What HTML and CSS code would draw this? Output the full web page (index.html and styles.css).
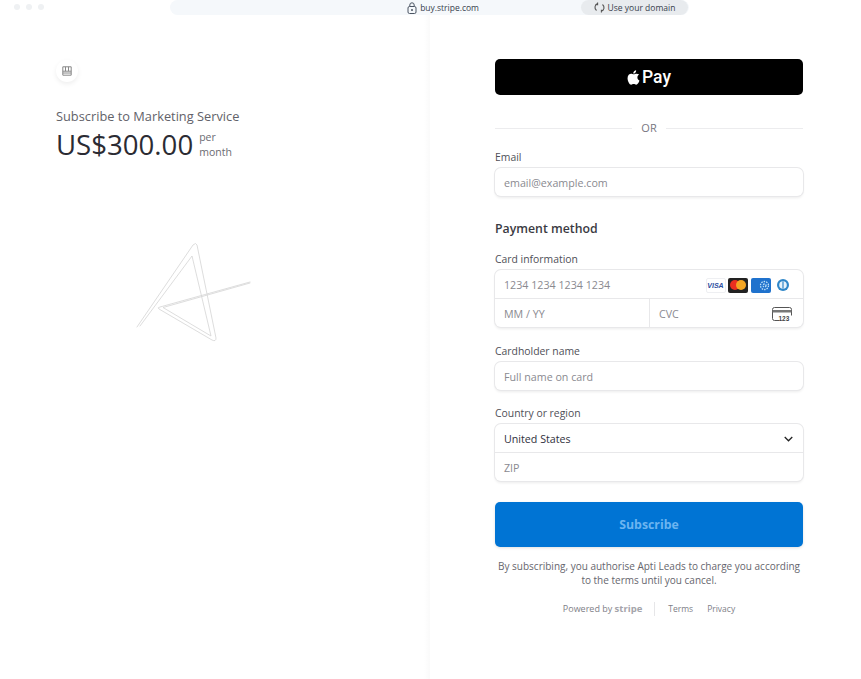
FILE: index.html
```html
<!DOCTYPE html>
<html lang="en">

<head>
    <meta charset="UTF-8">
    <meta name="viewport" content="width=device-width, initial-scale=1.0">
    <title>Subscribe to Marketing Service</title>
    <link rel="stylesheet" href="styles.css">
</head>

<body>
    <div class="topbar">
        <div class="dots"><span></span><span></span><span></span></div>
        <div class="url-bar">
            <div class="url-main">
                <svg class="lock" width="10" height="12" viewBox="0 0 10 12" fill="none" stroke="#4b5563" stroke-width="1">
                    <rect x="1" y="4.500" width="8" height="7" rx="1.500"/>
                    <path d="M2.800 4.500V3a2.200 2.200 0 0 1 4.400 0v1.500"/>
                    <circle cx="5" cy="8" r=".6" fill="#4b5563"/>
                </svg>
                <span>buy.stripe.com</span>
            </div>
            <div class="domain-pill">
                <svg width="11" height="11" viewBox="0 0 11 11" fill="none" stroke="#555" stroke-width="1.100">
                    <path d="M2.500 8.500A4 4 0 0 1 3.600 1.600M3.600 .4v2.200H1.600"/>
                    <path d="M8.500 2.500A4 4 0 0 1 7.400 9.400M7.400 10.600V8.400h2"/>
                </svg>
                <span>Use your domain</span>
            </div>
        </div>
    </div>

    <div class="page">
        <div class="summary">
            <div class="store-badge">
                <svg width="10" height="10" viewBox="0 0 10 10" fill="none" stroke="#888" stroke-width="1">
                    <path d="M.8.8h8.400v8.400H.8zM.8 5.200h8.400M.8 7h8.400M3.500.8v4.400M6.500.8v4.400"/>
                </svg>
            </div>
            <div class="product-name">Subscribe to Marketing Service</div>
            <div class="price-row">
                <span class="price">US$300.00</span>
                <span class="period">per<br>month</span>
            </div>
            <svg class="signature" width="120" height="104" viewBox="0 0 120 104" fill="none" stroke="#d4d4d4" stroke-width=".8" stroke-linejoin="round" stroke-linecap="round">
                <path d="M2 85L58 3Q61 0 62 3L81 96Q81 100 77 98L24 67Q22 65.500 25 65L115 40"/>
                <path d="M5 84L57 14L76 94L28 65.500L115 41"/>
            </svg>
        </div>

        <div class="checkout">
            <button class="apple-pay">
                <svg width="13" height="15" viewBox="0 0 14 16" fill="#fff">
                    <path d="M10.200 3.900c-1.100 0-1.900.7-2.900.7-1 0-1.800-.7-2.800-.7C2.700 3.900.6 5.400.6 8.700c0 3 2.100 7 3.900 7 .9 0 1.500-.7 2.700-.7 1.200 0 1.700.7 2.700.7 1.500 0 3-2.700 3.500-4.600-1.400-.6-2.200-1.800-2.200-3.200 0-1.300.7-2.400 1.900-3-.7-.7-1.800-1-2.900-1z"/>
                    <path d="M9.800.2c.1 1.100-.3 2-.9 2.600-.6.700-1.400 1.100-2.200 1 0-1 .4-1.900 1-2.500C8.300.7 9.100.3 9.800.2z"/>
                </svg>
                <span>Pay</span>
            </button>

            <div class="divider"><span>OR</span></div>

            <label class="field-label label-email">Email</label>
            <div class="field-box">
                <div class="field-row placeholder">email@example.com</div>
            </div>

            <h2 class="section-title">Payment method</h2>

            <label class="field-label">Card information</label>
            <div class="field-box">
                <div class="field-row placeholder split card-row">
                    <span>1234 1234 1234 1234</span>
                    <span class="card-icons">
                        <span class="card card-visa">VISA</span>
                        <span class="card card-mc"><i></i><i></i></span>
                        <span class="card card-amex">
                            <svg width="11" height="11" viewBox="0 0 11 11" fill="none" stroke="#bfe0f8" stroke-width="1.300" stroke-dasharray="1.500 1">
                                <circle cx="5.500" cy="5.500" r="4"/>
                                <circle cx="5.500" cy="5.500" r="1.500"/>
                            </svg>
                        </span>
                        <span class="card card-diners">
                            <svg width="12" height="12" viewBox="0 0 12 12">
                                <circle cx="6" cy="6" r="6" fill="#2f86c8"/>
                                <circle cx="6" cy="6" r="3.800" fill="#e8f3fb"/>
                                <path d="M6 2.500v7" stroke="#2f86c8" stroke-width="1.200"/>
                            </svg>
                        </span>
                    </span>
                </div>
                <div class="row-line two-cols">
                    <div class="field-row placeholder">MM / YY</div>
                    <div class="field-row placeholder split col-right">
                        <span>CVC</span>
                        <svg width="20" height="14" viewBox="0 0 20 14" fill="none">
                            <path d="M7 13.500H2.500a2 2 0 0 1-2-2v-9a2 2 0 0 1 2-2h15a2 2 0 0 1 2 2v6" stroke="#555"/>
                            <path d="M.5 3h19v2.500H.5z" fill="#777"/>
                            <text x="6.500" y="13.500" class="cvc-digits">123</text>
                        </svg>
                    </div>
                </div>
            </div>

            <label class="field-label label-gap">Cardholder name</label>
            <div class="field-box">
                <div class="field-row placeholder">Full name on card</div>
            </div>

            <label class="field-label label-gap">Country or region</label>
            <div class="field-box">
                <div class="field-row split value">
                    <span>United States</span>
                    <svg width="9" height="6" viewBox="0 0 10 6" fill="none" stroke="#222" stroke-width="1.400">
                        <path d="M.8.8L5 5l4.200-4.200"/>
                    </svg>
                </div>
                <div class="row-line field-row placeholder">ZIP</div>
            </div>

            <button class="subscribe">Subscribe</button>

            <p class="terms">By subscribing, you authorise Apti Leads to charge you according to the terms until you cancel.</p>

            <div class="footer">
                <span class="powered">Powered by <b>stripe</b></span>
                <span class="footer-links"><span>Terms</span><span>Privacy</span></span>
            </div>
        </div>
    </div>
</body>

</html>
```

FILE: styles.css
```css
html,
body {
    height: 100%;
}

body {
    font-family: "Open Sans", "Noto Sans", sans-serif;
    background-color: #fff;
    color: #30313d;
    margin: 0;
    display: flex;
    flex-direction: column;
    overflow: hidden;
}

/* browser strip along the top */
.topbar {
    height: 15px;
    flex-shrink: 0;
    display: flex;
    align-items: flex-start;
}

.dots {
    width: 170px;
    display: flex;
    gap: 6px;
    padding: 4px 0 0 14px;
    box-sizing: border-box;
}

.dots span {
    width: 6px;
    height: 6px;
    border-radius: 50%;
    background-color: #eff1f3;
}

.url-bar {
    width: 519px;
    height: 15px;
    background-color: #f5f8fb;
    border-radius: 8px;
    display: flex;
    font-size: 8.500px;
    color: #37414d;
}

.url-main {
    width: 411px;
    display: flex;
    justify-content: flex-end;
    align-items: center;
    gap: 3px;
    padding-right: 102px;
    box-sizing: border-box;
}

.domain-pill {
    width: 107px;
    height: 15px;
    background-color: #e8ebee;
    border-radius: 8px;
    display: flex;
    align-items: center;
    justify-content: center;
    gap: 3px;
}

.page {
    flex: 1;
    display: flex;
}

/* left side */
.summary {
    width: 430px;
    flex-shrink: 0;
    padding: 45px 0 0 56px;
    box-sizing: border-box;
    background: linear-gradient(to right, #fff 424px, #fafafa 430px);
}

.store-badge {
    width: 22px;
    height: 22px;
    border-radius: 50%;
    box-shadow: 0 2px 5px rgba(0, 0, 0, 0.07);
    display: flex;
    align-items: center;
    justify-content: center;
}

.product-name {
    margin-top: 24px;
    font-size: 12.800px;
    line-height: 20px;
    color: #626269;
}

.price-row {
    display: flex;
    align-items: center;
    gap: 6px;
    margin-top: -1px;
}

.price {
    font-size: 27.600px;
    line-height: 38px;
    color: #2b2b33;
}

.period {
    padding-top: 2px;
    font-size: 10.500px;
    line-height: 15px;
    color: #6b6b72;
}

.signature {
    display: block;
    margin: 79px 0 0 79px;
}

/* right side */
.checkout {
    flex: 1;
    padding: 44px 58px 0 65px;
}

.apple-pay {
    width: 100%;
    height: 36px;
    background-color: #000;
    color: #fff;
    border: none;
    border-radius: 5px;
    display: flex;
    align-items: center;
    justify-content: center;
    gap: 2px;
    padding: 0;
    font-family: Roboto, sans-serif;
    font-size: 17.500px;
    font-weight: 500;
}

.divider {
    display: flex;
    align-items: center;
    gap: 9px;
    margin-top: 25px;
    font-size: 11px;
    line-height: 16px;
    color: #77777f;
}

.divider::before,
.divider::after {
    content: "";
    flex: 1;
    height: 1px;
    background-color: #ececee;
}

.field-label {
    display: block;
    font-size: 10.400px;
    line-height: 14px;
    color: #4f4f57;
    margin-bottom: 4px;
}

.label-email {
    margin-top: 14px;
}

.label-gap {
    margin-top: 16.500px;
}

.field-box {
    border-radius: 6px;
    background-color: #fff;
    box-shadow: 0 0 0 1px #e8e8ea, 0 2px 3px rgba(0, 0, 0, 0.08);
}

.field-row {
    height: 28px;
    padding: 2px 9px 0;
    display: flex;
    align-items: center;
    font-size: 10.700px;
    box-sizing: border-box;
}

.split {
    justify-content: space-between;
}

.placeholder {
    color: #8a8a90;
}

.value {
    color: #30313d;
    padding-right: 10px;
}

.row-line {
    border-top: 1px solid #e8e8ea;
}

.field-row.row-line {
    height: 29px;
}

.two-cols {
    display: flex;
}

.two-cols .field-row {
    width: 50%;
}

.col-right {
    border-left: 1px solid #e8e8ea;
    padding-right: 11px;
}

.card-row {
    padding-right: 10px;
}

.cvc-digits {
    font-family: "Liberation Sans", sans-serif;
    font-size: 6.500px;
    font-weight: bold;
    fill: #444;
}

.section-title {
    margin: 24px 0 14px;
    font-size: 12.300px;
    line-height: 18px;
    font-weight: 600;
    color: #3a3a42;
}

.card-icons {
    display: flex;
    align-items: center;
    gap: 2.500px;
}

.card {
    width: 20px;
    height: 15px;
    border-radius: 2px;
    box-sizing: border-box;
    display: flex;
    align-items: center;
    justify-content: center;
}

.card-visa {
    border: 1px solid #eeeff2;
    font-family: "Liberation Sans", sans-serif;
    font-size: 7px;
    font-weight: bold;
    font-style: italic;
    color: #2b4da0;
}

.card-mc {
    background-color: #222;
}

.card-mc i {
    width: 10px;
    height: 10px;
    border-radius: 50%;
    background-color: #eb2f20;
}

.card-mc i + i {
    margin-left: -4px;
    background-color: #f5a623;
}

.card-amex {
    background-color: #1f72cd;
    justify-content: flex-end;
    padding-right: 1px;
}

.subscribe {
    display: block;
    width: 100%;
    height: 45px;
    margin-top: 20.500px;
    background-color: #0074d4;
    color: #6cb4f0;
    border: none;
    border-radius: 5px;
    box-shadow: 0 1px 3px rgba(0, 0, 0, 0.12);
    font-family: inherit;
    font-size: 12.300px;
    font-weight: 700;
}

.terms {
    margin: 12.500px 0 0;
    font-size: 10px;
    line-height: 14px;
    text-align: center;
    color: #66666e;
}

.footer {
    display: flex;
    justify-content: center;
    margin-top: 15px;
    font-size: 8.500px;
    line-height: 14px;
    color: #808087;
}

.powered {
    font-size: 9px;
    padding-right: 12px;
    border-right: 1px solid #e6e6e8;
}

.powered b {
    font-size: 9.500px;
    color: #a5a5ab;
}

.footer-links {
    display: flex;
    gap: 14px;
    padding-left: 13px;
}
```
